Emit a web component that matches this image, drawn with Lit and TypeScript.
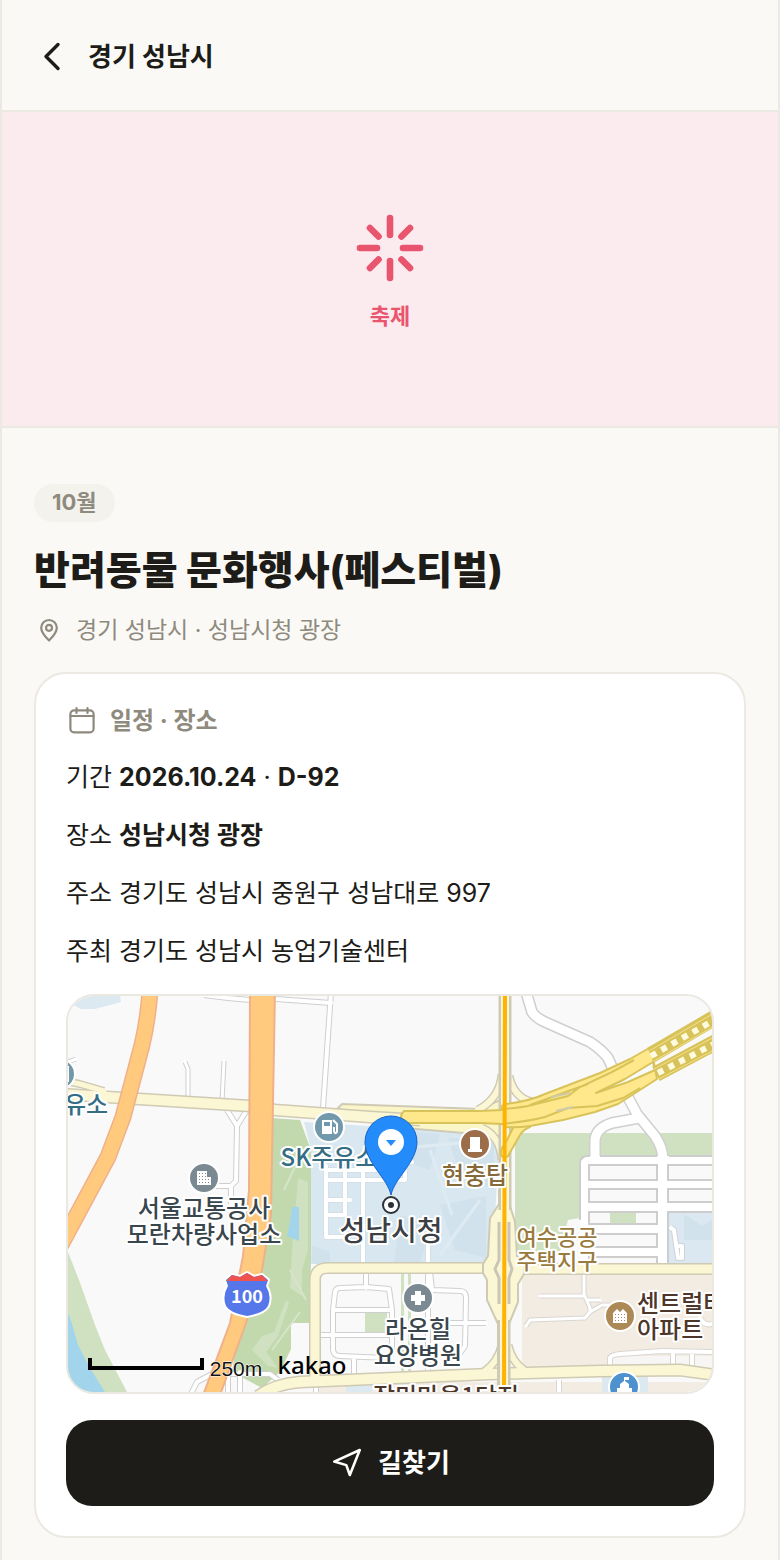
import { LitElement, html, svg, css } from "lit";
import { customElement } from "lit/decorators.js";

interface Road {
  d: string;
  w: number;
}

const lanes: Road[] = [
  { d: "M204 995L228 998L250 1000M276 999L331 1003", w: 4 },
  { d: "M331 992L323 1108", w: 4 },
  { d: "M185 1062L188 1069V1100M224 1061L222 1102", w: 3 },
  { d: "M227 1110L237 1126L247 1110M237 1126L236 1181L231 1186H214M231 1186V1204", w: 4 },
  { d: "M68 1062L76 1059", w: 3 },
  { d: "M366 1272V1288M335 1294Q335 1288 340 1288L366 1287L389 1289L392 1310V1350M335 1292L333 1310V1350Q334 1356 340 1356L388 1358M335 1310H391M320 1335H392", w: 4 },
  { d: "M430 1272L432 1290L460 1291Q466 1291 466 1298L465 1346L460 1353M428 1274V1374M450 1323H486M354 1360V1376M316 1380V1392", w: 4 },
];

const estateLanes: Road[] = [
  { d: "M540 1296H584M584 1274V1294L590 1308V1312L585 1318L530 1320L526 1326M588 1300H600M590 1312L602 1305H622", w: 3 },
  { d: "M559 1380V1394M700 1318Q704 1326 712 1324", w: 4 },
  { d: "M610 1372V1358Q611 1355 620 1354L662 1351L714 1352M673 1354V1366M692 1354V1366", w: 4 },
];

const depotLanes: Road[] = [
  { d: "M188 1400L197 1382L212 1374H270L278 1380M228 1372V1394M240 1372V1394", w: 4 },
];

const avenues: Road[] = [
  { d: "M526 992L532 1012Q536 1018 545 1022L590 1042Q602 1050 608 1058L616 1076M624 1090L637 1114L655 1136Q663 1148 663 1160", w: 9 },
  { d: "M639 1118L612 1123Q596 1128 595 1140V1160", w: 9 },
];

const mainRoads: Road[] = [
  { d: "M60 1094L250 1106L275 1110L370 1117L420 1120", w: 10 },
  { d: "M60 1080L80 1084L104 1091", w: 5 },
  { d: "M315 1380V1280Q315 1268 328 1268H492", w: 9 },
  { d: "M518 1269H716", w: 9 },
  { d: "M258 1396Q275 1384 300 1382L490 1374L600 1371L680 1370L716 1375", w: 10 },
  { d: "M502 1074Q500 1098 478 1110M509 1076Q514 1098 532 1102M502 1160Q500 1136 482 1128", w: 6 },
  { d: "M502 1345Q498 1362 484 1372M508 1345Q512 1362 524 1370", w: 6 },
];

const roads = (list: Road[], edge: string, fill: string, rim: number) => svg`
  ${list.map((r) => svg`<path d=${r.d} fill="none" stroke=${edge} stroke-width=${r.w + rim} stroke-linejoin="round"/>`)}
  ${list.map((r) => svg`<path d=${r.d} fill="none" stroke=${fill} stroke-width=${r.w} stroke-linejoin="round" stroke-linecap="round"/>`)}
`;

@customElement("area-map")
export class AreaMap extends LitElement {
  static styles = css`
    :host {
      display: block;
      height: 396px;
      border: 2px solid #eae8e1;
      border-radius: 28px;
      overflow: hidden;
      background: #f9f9f9;
    }
    .map {
      display: block;
      width: 100%;
      height: 100%;
    }
    text {
      font-family: "Noto Sans CJK KR", sans-serif;
      font-weight: 500;
      font-size: 24px;
      paint-order: stroke;
      stroke: #fff;
      stroke-width: 4px;
      stroke-linejoin: round;
      text-anchor: middle;
    }
    .fuel { fill: #356d85; }
    .civic { fill: #3a464d; }
    .hall { fill: #3c4044; font-size: 28px; }
    .sight { fill: #86693a; }
    .district { fill: #9a7b3e; font-size: 22px; }
    .homes { fill: #4d362a; }
    .start { text-anchor: start; }
    .shield { fill: #fff; stroke: none; font-size: 18px; font-weight: 700; }
    .scale { fill: #111; font-family: "Liberation Sans", sans-serif; font-weight: 400; font-size: 21px; stroke-width: 1px; }
    .brand { fill: #000; font-family: "Noto Sans", sans-serif; font-size: 24px; stroke: none; }
  `;

  render() {
    return html`
      <svg class="map" viewBox="68 996 644 396" preserveAspectRatio="xMidYMid slice" role="img" aria-label="성남시청 주변 지도">
        <rect x="68" y="996" width="644" height="396" fill="#f9f9f9"/>
        <path d="M68 996H120L121 1002L95 1009H81L68 1002Z" fill="#dce9f1"/>
        <path d="M68 1252L79 1280L95 1325L105 1350L127 1392H68Z" fill="#cfe1c1"/>
        <path d="M68 1313L72 1324L78 1345L90 1368L105 1392H68Z" fill="#a2d5eb"/>
        <path d="M272 1118L300 1120L311 1150V1264L309 1323H291V1349L280 1372L262 1388L232 1372Z" fill="#c2d9ae"/>
        <path d="M298 1178L308 1182V1250L302 1270V1296L290 1288L292 1250ZM262 1336L274 1332L286 1300L289 1303L278 1336L266 1352L278 1368L268 1366L252 1350Z" fill="#cfe1c0"/>
        <path d="M284 1190L296 1165M290 1270L306 1300M272 1350L300 1312" fill="none" stroke="#d6e5ca" stroke-width="2"/>
        <path d="M292 1207H299V1241L287 1236L290 1222Z" fill="#a2d5eb"/>
        <path d="M304 1122L500 1134L492 1264H311V1150Z" fill="#d9e7f1"/>
        <path d="M390 1130L440 1134L430 1170L400 1160ZM448 1138H494V1190L460 1175ZM440 1205L486 1196V1258L455 1250ZM400 1215L432 1225L420 1262H394ZM312 1245L330 1252V1264H312Z" fill="#d2e2ed"/>
        <path d="M382 1150L494 1140M430 1150L452 1215M440 1255L480 1200" fill="none" stroke="#dfebf3" stroke-width="3"/>
        ${roads([{ d: "M326 1166V1237H345M363 1158V1264M326 1170H405V1180H326M326 1200H350M345 1170V1215H326M412 1162H388M428 1245V1264", w: 4 }], "#cfd8e0", "#ffffff", 1)}
        <rect x="365" y="1313" width="22" height="20" fill="#cfe1c1"/>
        <rect x="401" y="1274" width="3" height="100" fill="#cfe1c1"/>
        <rect x="408" y="1274" width="3" height="100" fill="#cfe1c1"/>
        <path d="M515 1133H712V1160H580V1218L568 1220L560 1252H515Z" fill="#cfe1c1"/>
        <path d="M522 1274H712V1368H522ZM317 1382H712V1392H317Z" fill="#f2ece2"/>
        <path d="M612 1356H712V1368H612Z" fill="#f7f6f4"/>
        <path d="M346 1384H372V1392H346ZM602 1376H648V1392H602Z" fill="#dce9f1"/>

        ${roads(depotLanes, "#cfcfcf", "#ffffff", 2)}
        ${roads(lanes, "#cfcfcf", "#ffffff", 2)}
        ${roads(estateLanes, "#d9d6d2", "#ffffff", 2)}
        ${roads(avenues, "#cfcfcf", "#ffffff", 3)}
        <path d="M712 1156H586L580 1162V1264H712Z" fill="#fff"/>
        <path d="M590 1156H586Q580 1157 580 1163V1220M600 1156H657M669 1156H712" fill="none" stroke="#cdcdcd" stroke-width="2"/>
        <g fill="#f9f9f9" stroke="#cdcdcd" stroke-width="2">
          <path d="M589 1165H657V1180H589ZM668 1165H716V1180H668ZM589 1189H657V1202H589ZM668 1189H716V1202H668ZM589 1212H657V1224H589ZM589 1234H657V1247H589ZM589 1257H657V1268H589Z"/>
          <path d="M668 1212H716V1268H668Z" fill="#dbe8f1"/>
        </g>
        <path d="M610 1213H636V1223H610Z" fill="#cfe1c1"/>
        <path d="M684 1214L702 1226L712 1220V1240H684Z" fill="#d2e2ed"/>
        ${roads([{ d: "M671 1228L674 1230L678 1258H682V1246H676", w: 4 }], "#cfd3d8", "#ffffff", 2)}

        <path d="M338 1108L342 1104L480 1109L500 1100V1136L440 1131L380 1126Z" fill="#fbf6c8" stroke="#cfcab4" stroke-width="2"/>
        ${roads(mainRoads, "#cfcab4", "#fbf6d3", 3)}
        <path d="M499 1190V1204L490 1218L488 1256L483 1264V1273L487 1280V1300L498 1324V1394H509V1324L518 1302V1284L524 1274V1264L517 1256L515 1222L510 1206V1190Z" fill="#fbf6d3" stroke="#cfcab4" stroke-width="2"/>
        <path d="M505 990V1210M504 1320V1396" fill="none" stroke="#cfcab4" stroke-width="13"/>
        <path d="M505 990V1210M504 1320V1396" fill="none" stroke="#fbf6d3" stroke-width="8"/>
        <path d="M499 1222V1260L495 1269L499 1278V1304M509 1222V1260L512 1269L509 1278V1304" fill="none" stroke="#cac6b6" stroke-width="3"/>

        ${roads([{ d: "M150 990Q148 1020 142 1045L123 1117L108 1157L85 1200L56 1254", w: 14 }], "#f0b08a", "#ffca7d", 3)}
        <path d="M250 990L249 1190L243 1256L230 1323L202 1398H219L246 1323L262 1270L271 1215L275 990Z" fill="#ffca7d" stroke="#f0b08a" stroke-width="2"/>

        <g fill="#ffe88b" stroke="#d8c35a" stroke-width="2" stroke-linejoin="round">
          <path d="M501 1155Q500 1149 505 1144L515 1124L530 1116V1127Q524 1129 520 1135L508 1156Q504 1160 501 1155Z"/>
          <path d="M404 1111H480L502 1110Q500 1105 506 1104Q530 1101 545 1094L600 1073L630 1059L651 1047L657 1079L643 1088L618 1104L595 1112L563 1120L530 1126Q516 1128 506 1127L502 1124L480 1123H404Q398 1117 404 1111Z"/>
          <path d="M596 1093L625 1079L653 1062L655 1070L628 1082Z" fill="#f9f9f9"/>
        </g>
        <path d="M502 1109Q520 1108 532 1105L568 1096L580 1087L612 1072L634 1060M502 1124Q530 1121 545 1117L568 1108L597 1106L623 1098L640 1088M530 1105Q560 1094 588 1084" fill="none" stroke="#d8c35a" stroke-width="2"/>
        <path d="M551 1097L570 1093M556 1111L573 1107" fill="none" stroke="#cfc9ad" stroke-width="2"/>
        <g fill="none">
          <path d="M651 1055L716 1017M656 1074L716 1042" stroke="#d8c35a" stroke-width="16"/>
          <path d="M649 1051L716 1012M654 1061L716 1025M654 1069L716 1036M659 1079L716 1049" stroke="#f3e08a" stroke-width="1"/>
          <path d="M651 1056L716 1019M658 1073L716 1043" stroke="#fffbe0" stroke-width="6" stroke-dasharray="6 6"/>
          <path d="M505 990L504 1396" stroke="#ffb300" stroke-width="4"/>
        </g>

        <g stroke="#fff" stroke-width="2">
          <circle cx="60" cy="1074" r="15" fill="#7299ab"/>
          <circle cx="329" cy="1127" r="15" fill="#7299ab"/>
          <circle cx="475" cy="1144" r="15" fill="#9b6d49"/>
          <circle cx="204" cy="1178" r="15" fill="#7b8a92"/>
          <circle cx="418" cy="1298" r="15" fill="#7b8a92"/>
          <circle cx="620" cy="1316" r="15" fill="#ad8a55"/>
          <circle cx="624" cy="1387" r="15" fill="#4d92cf"/>
        </g>
        <path d="M63 1066H69V1082H63Z" fill="#fff"/>
        <path d="M322 1120H332V1134H322ZM324 1122V1126H330V1122Z" fill="#fff" fill-rule="evenodd"/>
        <path d="M333 1120L337 1124V1132Q335 1135 334 1131V1127" fill="none" stroke="#fff" stroke-width="2"/>
        <path d="M470 1137H480V1149H482V1152H468V1149H470Z" fill="#fff"/>
        <path d="M197 1171H207V1177H211V1185H197Z" fill="#fff"/>
        <path d="M199 1173.500H206M199 1176.500H206M199 1179.500H210M199 1182.500H210" stroke="#7b8a92" stroke-width="1" stroke-dasharray="1 2"/>
        <path d="M415 1291H421V1295H425V1301H421V1305H415V1301H411V1295H415Z" fill="#fff"/>
        <path d="M613 1313L617 1309L620 1312L623 1309L627 1313V1323H613Z" fill="#fff"/>
        <path d="M615 1314.500H626M615 1317.500H626M615 1320.500H626" stroke="#ad8a55" stroke-width="1" stroke-dasharray="1 2"/>
        <path d="M617 1392V1388H620V1384L624 1381V1377H629V1380H625V1381L629 1384V1388H632V1392Z" fill="#fff"/>

        <text class="fuel start" x="64" y="1113">유소</text>
        <text class="fuel" x="329" y="1166">SK주유소</text>
        <text class="sight" x="475" y="1184">현충탑</text>
        <text class="civic" x="204" y="1217">서울교통공사</text>
        <text class="civic" x="204" y="1243">모란차량사업소</text>
        <text class="hall" x="391" y="1241">성남시청</text>
        <text class="district" x="557" y="1245">여수공공</text>
        <text class="district" x="557" y="1269">주택지구</text>
        <text class="civic" x="418" y="1338">라온힐</text>
        <text class="civic" x="418" y="1364">요양병원</text>
        <text class="homes start" x="637" y="1312">센트럴타</text>
        <text class="homes start" x="637" y="1338">아파트</text>
        <text class="homes" x="446" y="1405">장미마을1단지</text>

        <path d="M226 1280L232 1275L240 1277L247 1273L254 1277L262 1275L268 1280L266 1286Q272 1296 268 1306Q264 1313 247 1316Q230 1313 226 1306Q222 1296 228 1286Z" fill="#5677ea" stroke="#fff" stroke-width="4" stroke-linejoin="round" paint-order="stroke"/>
        <path d="M226 1281L232 1275L240 1277L247 1273L254 1277L262 1275L268 1281Z" fill="#ee5350"/>
        <text class="shield" x="247" y="1303">100</text>

        <circle cx="391" cy="1205" r="8" fill="#fff" stroke="#2c3238" stroke-width="2"/>
        <circle cx="391" cy="1205" r="3" fill="#2c3238"/>
        <path d="M391 1195C388 1179 365 1162 365 1142A26 26 0 0 1 417 1142C417 1162 394 1179 391 1195Z" fill="#248bfb" stroke="#1763c9" stroke-width="1"/>
        <circle cx="391" cy="1142" r="13" fill="#fff"/>
        <path d="M386 1140H396L391 1146Z" fill="#248bfb"/>

        <path d="M90 1358V1368H202V1358" fill="none" stroke="#000" stroke-width="4"/>
        <text class="scale" x="236" y="1376">250m</text>
        <text class="brand" x="312" y="1374">kakao</text>
      </svg>
    `;
  }
}

@customElement("app-root")
export class AppRoot extends LitElement {
  static styles = css`
    :host {
      display: block;
      box-sizing: border-box;
      min-height: 100vh;
      border: solid #ebe9e2;
      border-width: 0 2px;
      background: #faf9f6;
      color: #1d1c18;
      font-family: Inter, "Noto Sans CJK KR", sans-serif;
      font-size: 25px;
    }
    h1, h2, h3, p { margin: 0; }
    .topbar {
      display: flex;
      align-items: center;
      gap: 18px;
      box-sizing: border-box;
      height: 112px;
      padding: 3px 32px 0;
      border-bottom: 2px solid #ebe9e2;
    }
    .back {
      display: flex;
      padding: 0;
      border: 0;
      background: none;
      color: inherit;
    }
    .place {
      font-size: 26px;
      line-height: 38px;
      font-weight: 700;
    }
    .hero {
      display: flex;
      flex-direction: column;
      align-items: center;
      justify-content: center;
      gap: 16px;
      box-sizing: border-box;
      height: 316px;
      padding-top: 6px;
      border-bottom: 2px solid #ebe9e2;
      background: #fcebee;
      color: #e9546f;
      font-size: 22px;
      line-height: 32px;
      font-weight: 700;
    }
    .content { padding: 56px 32px 22px; }
    .badge {
      display: inline-block;
      padding: 0 18px 2px;
      border-radius: 19px;
      background: #f3f2ed;
      color: #8f8a7e;
      font-size: 22px;
      line-height: 36px;
      font-weight: 700;
      vertical-align: top;
    }
    .title {
      margin-top: 23px;
      font-size: 39px;
      line-height: 50px;
      font-weight: 800;
    }
    .where {
      display: flex;
      align-items: center;
      gap: 12px;
      margin: 17px 0 24px;
      color: #8f8a7e;
      font-size: 23px;
      line-height: 36px;
    }
    .card {
      padding: 30px;
      border: 2px solid #ebe9e2;
      border-radius: 32px;
      background: #fff;
    }
    .heading {
      display: flex;
      align-items: center;
      gap: 12px;
      color: #8f8a7e;
      font-size: 24px;
      line-height: 34px;
      font-weight: 700;
    }
    .facts {
      display: grid;
      gap: 18px;
      margin: 19px 0 23px;
      line-height: 40px;
    }
    .facts b { font-weight: 700; }
    .route {
      display: flex;
      align-items: center;
      justify-content: center;
      gap: 14px;
      width: 100%;
      height: 86px;
      margin-top: 26px;
      border: 0;
      border-radius: 26px;
      background: #1d1c18;
      color: #fff;
      font: inherit;
      font-size: 26px;
      line-height: 34px;
      font-weight: 700;
    }
    .icon {
      display: block;
      flex: none;
      fill: none;
      stroke: currentColor;
      stroke-linecap: round;
      stroke-linejoin: round;
    }
  `;

  render() {
    return html`
      <header class="topbar">
        <button class="back" type="button" aria-label="뒤로">
          <svg class="icon" width="36" height="36" viewBox="0 0 36 36" stroke-width="3.400"><path d="M24 5.500L12 17.500L24 29.500"/></svg>
        </button>
        <h2 class="place">경기 성남시</h2>
      </header>
      <div class="hero">
        <svg class="icon" width="72" height="72" viewBox="-36 -36 72 72" stroke-width="6.600">
          <path d="M0 -30V-13M0 13V30M-30 0H-13M13 0H30M-20 -20L-11.500 -11.500M20 -20L11.500 -11.500M-20 20L-11.500 11.500M20 20L11.500 11.500"/>
        </svg>
        <span>축제</span>
      </div>
      <main class="content">
        <span class="badge">10월</span>
        <h1 class="title">반려동물 문화행사(페스티벌)</h1>
        <p class="where">
          <svg class="icon" width="30" height="30" viewBox="0 0 30 30" stroke-width="2.200"><path d="M15 25.500C12 22.500 7.200 18 7.200 12.800A7.800 7.800 0 0 1 22.800 12.800C22.800 18 18 22.500 15 25.500Z"/><circle cx="15" cy="12.800" r="3"/></svg>
          <span>경기 성남시 · 성남시청 광장</span>
        </p>
        <section class="card">
          <h3 class="heading">
            <svg class="icon" width="32" height="32" viewBox="0 0 32 32" stroke-width="2.200"><rect x="4.400" y="5.400" width="23.200" height="22" rx="3.600"/><path d="M4.400 11H27.600M10.500 3V8M21.500 3V8"/></svg>
            <span>일정 · 장소</span>
          </h3>
          <div class="facts">
            <p>기간 <b>2026.10.24</b> · <b>D-92</b></p>
            <p>장소 <b>성남시청 광장</b></p>
            <p>주소 경기도 성남시 중원구 성남대로 997</p>
            <p>주최 경기도 성남시 농업기술센터</p>
          </div>
          <area-map></area-map>
          <button class="route" type="button">
            <svg class="icon" width="34" height="34" viewBox="0 0 24 24" stroke-width="1.800"><path d="M3 11L21 2.800L14 20.500L11.500 13.500Z"/></svg>
            <span>길찾기</span>
          </button>
        </section>
      </main>
    `;
  }
}
